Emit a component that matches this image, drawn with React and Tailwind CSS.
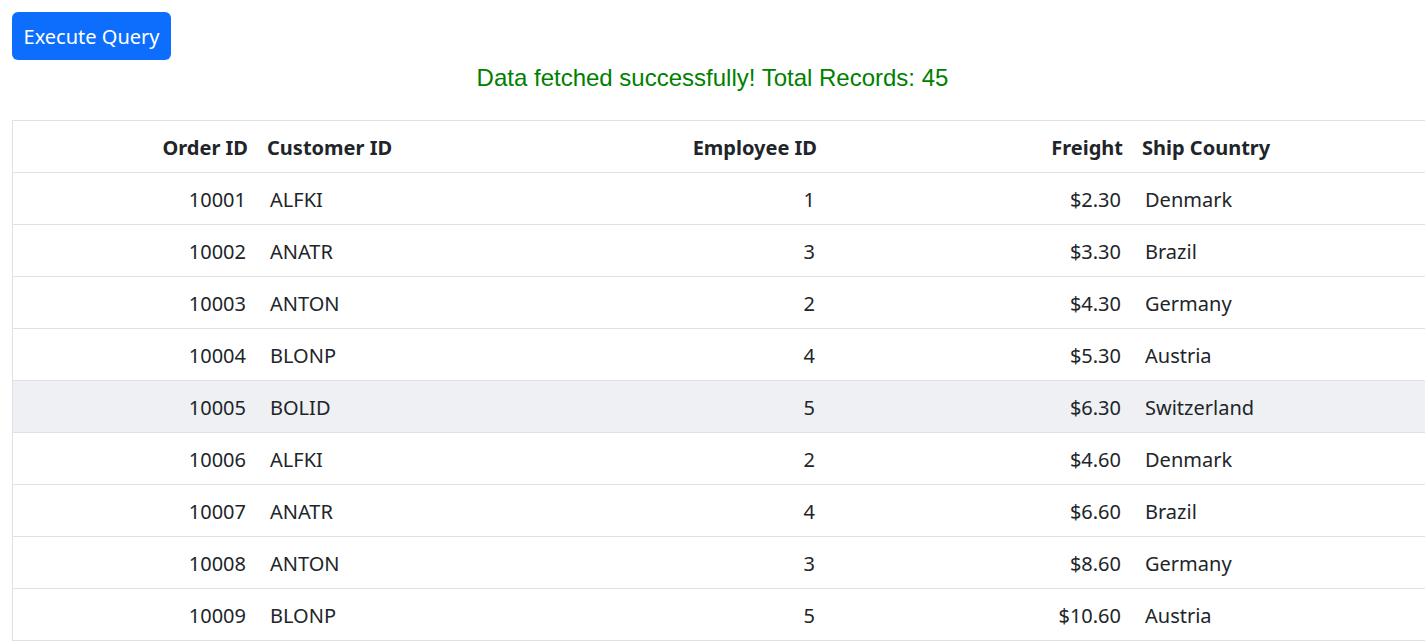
const rows = [
  ["10001","ALFKI","1","$2.30","Denmark"],
  ["10002","ANATR","3","$3.30","Brazil"],
  ["10003","ANTON","2","$4.30","Germany"],
  ["10004","BLONP","4","$5.30","Austria"],
  ["10005","BOLID","5","$6.30","Switzerland"],
  ["10006","ALFKI","2","$4.60","Denmark"],
  ["10007","ANATR","4","$6.60","Brazil"],
  ["10008","ANTON","3","$8.60","Germany"],
  ["10009","BLONP","5","$10.60","Austria"],
];
const cols = "grid grid-cols-[245px_285px_285px_305px_1fr]";
export default function App() {
  return (
    <div className="h-[643px] overflow-hidden bg-white text-[#212529]" style={{fontFamily:'"Noto Sans","Open Sans",sans-serif'}}>
      <div className="pt-3 pl-3">
        <button className="h-12 w-[159px] rounded-md bg-[#0d6efd] pt-[1px] text-[20px] text-white">Execute Query</button>
      </div>
      <div className="mt-[4px] text-center text-[24px] leading-[28px] text-[#008000]" style={{fontFamily:'"Liberation Sans",Arial,sans-serif'}}>
        Data fetched successfully! Total Records: 45
      </div>
      <div className="ml-3 mt-[28px] w-[1430px] border border-[#dee2e6] text-[20px]">
        <div className={`${cols} h-[51px] items-center pt-[2px] font-bold`}>
          <div className="pr-[10px] text-right">Order ID</div>
          <div className="pl-[9px]">Customer ID</div>
          <div className="pr-[11px] text-right">Employee ID</div>
          <div className="pr-[10px] text-right">Freight</div>
          <div className="pl-[9px]">Ship Country</div>
        </div>
        {rows.map((r, i) => (
          <div key={i} className={`${cols} h-[52px] items-center border-t border-[#dee2e6] pt-[2px] ${i === 4 ? "bg-[#eef0f3]" : ""}`}>
            <div className="pr-[12px] text-right">{r[0]}</div>
            <div className="pl-[12px]">{r[1]}</div>
            <div className="pr-[13px] text-right">{r[2]}</div>
            <div className="pr-[12px] text-right">{r[3]}</div>
            <div className="pl-[12px]">{r[4]}</div>
          </div>
        ))}
      </div>
    </div>
  );
}
